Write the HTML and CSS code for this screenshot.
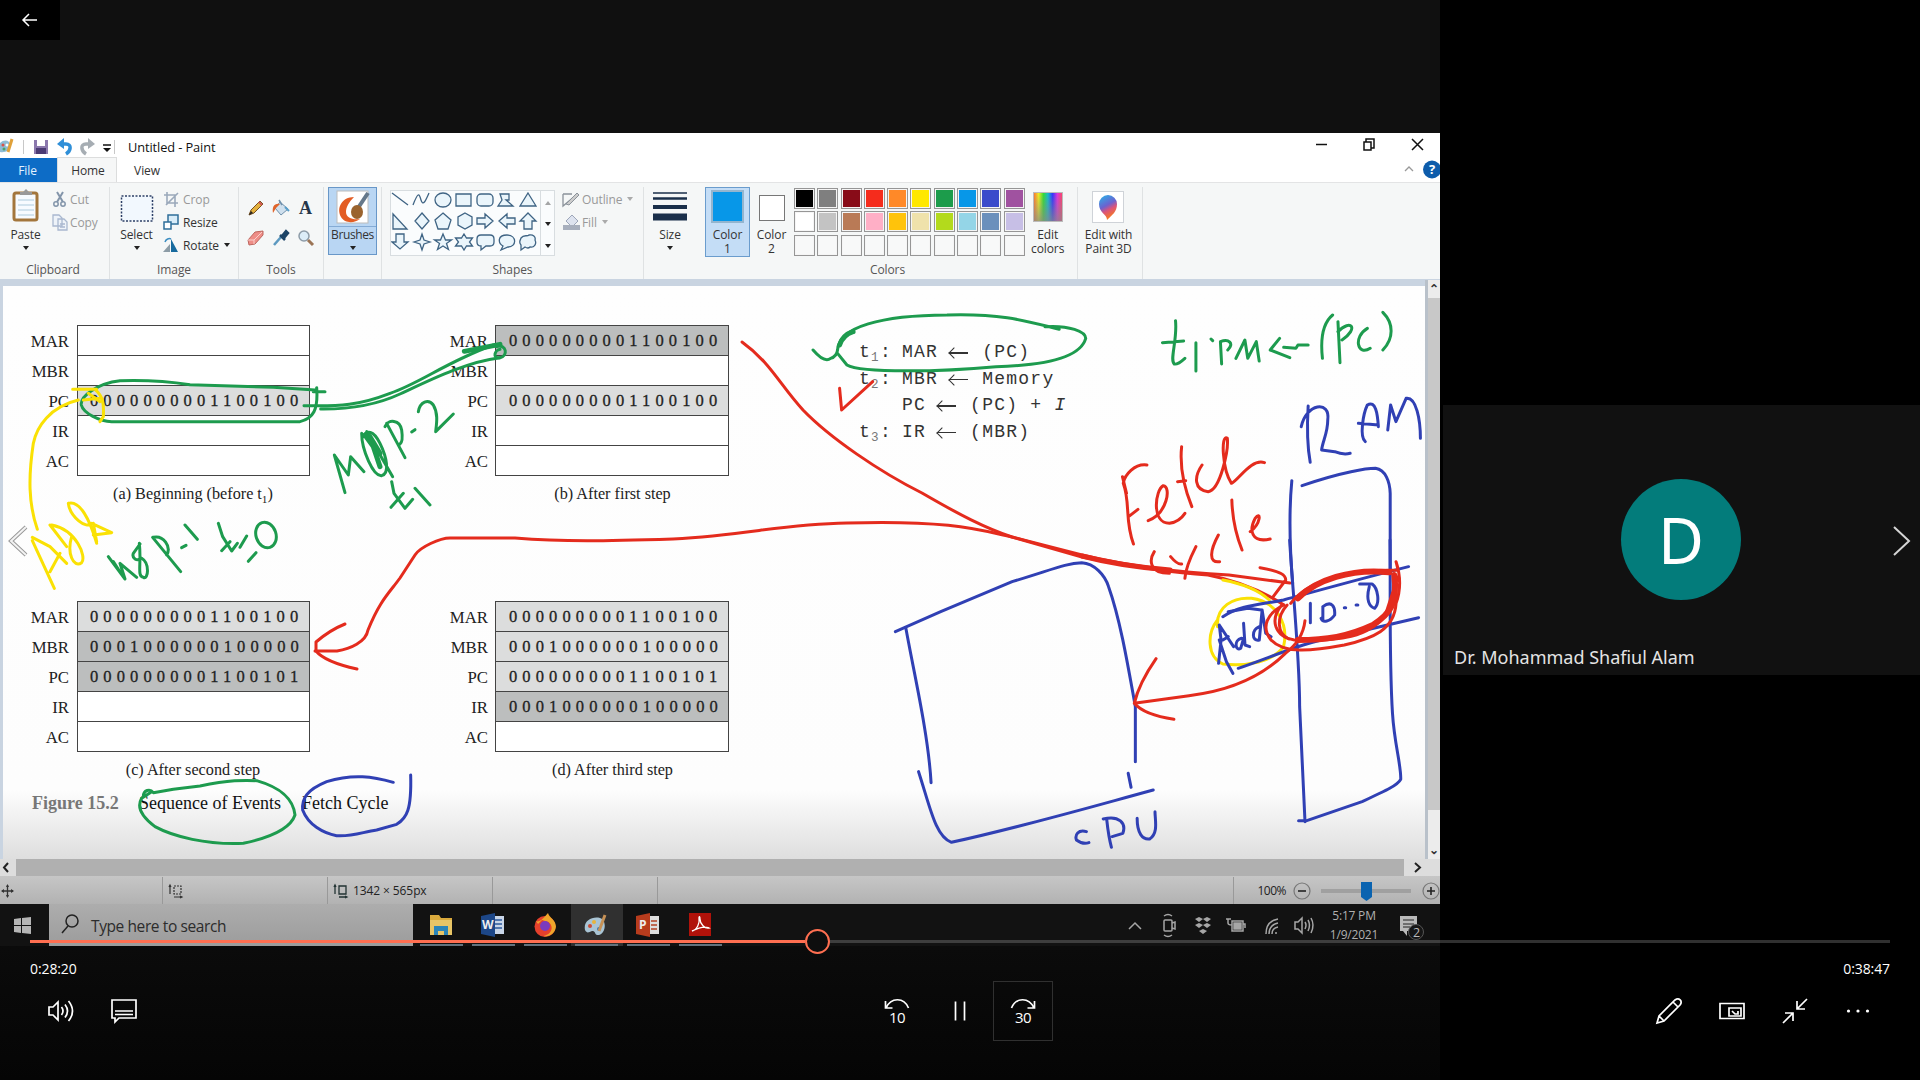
FILE: index.html
```html
<!DOCTYPE html>
<html lang="en">
<head>
<meta charset="utf-8">
<title>Lecture recording</title>
<link rel="stylesheet" href="styles.css">
</head>
<body>
<main class="player">
  <section class="screen">
    <div class="letterbox"></div>
    <div class="paint">
      <header class="titlebar">
        <div class="quick">
          <svg width="23" height="22"><path d="M0 7c4-4 10-3 10 2s-4 8-10 7z" fill="#8fbcd6"/><circle cx="3" cy="9" r="1.500" fill="#d9534a"/><circle cx="7" cy="9" r="1.500" fill="#fff"/><circle cx="4" cy="13" r="1.500" fill="#4da36b"/><path d="M8 16l4-13" stroke="#e0a13a" stroke-width="3"/></svg>
          <i class="bar"></i>
          <svg width="90" height="22">
            <path d="M10 4h14v14H10z" fill="#8b78ad"/><path d="M13 4h8v6h-8z" fill="#fff"/><path d="M12 12h10v6H12z" fill="#4b3b74"/>
            <path d="M37 8h5c6 0 5 7 0 10" fill="none" stroke="#2f8fd8" stroke-width="3.5"/><path d="M33 8l7-6v11z" fill="#2f8fd8"/>
            <path d="M67 8h-5c-6 0-5 7 0 10" fill="none" stroke="#a6adb3" stroke-width="3.5"/><path d="M71 8l-7-6v11z" fill="#a6adb3"/>
            <path d="M79 9h8" stroke="#111" stroke-width="1.5"/><path d="M79 12h8l-4 4z" fill="#111"/>
          </svg>
          <i class="bar"></i>
          <span class="doc-title">Untitled - Paint</span>
        </div>
        <svg class="win-buttons" width="130" height="26" fill="none" stroke="#111" stroke-width="1.5">
          <path d="M6 11.5h11"/><path d="M54 9h7v8h-7zM56 9V6h8v9h-3"/><path d="M102 6l11 11M113 6l-11 11"/>
        </svg>
      </header>
      <nav class="tabs">
        <span class="tab file">File</span><span class="tab home">Home</span><span class="tab view">View</span>
        <svg class="help" width="40" height="24"><path d="M5 13l4-4 4 4" fill="none" stroke="#999" stroke-width="1.3"/><circle cx="32" cy="11.500" r="9" fill="#0d5cab"/><text x="29" y="16" fill="#fff" font-size="13" font-weight="700">?</text></svg>
      </nav>
      <div class="ribbon">
        <section class="group clipboard">
          <div class="body">
            <div class="big paste">
              <svg width="28" height="35"><rect x="2" y="5" width="23" height="27" rx="2" fill="#f7fbff" stroke="#a3763c" stroke-width="3"/><path d="M8 7V4h3l3-3 3 3h3v3z" fill="#999"/><path d="M6 12h16M6 17h16M6 22h16M6 27h16" stroke="#c6dbe9" stroke-width="1.500"/></svg>
              <span>Paste</span><b class="caret"></b>
            </div>
            <div class="list dim">
              <span><svg width="19" height="18"><path d="M6 2l6 10M12 2L6 12" stroke="#8395aa" stroke-width="2"/><circle cx="5" cy="14" r="2.200" fill="none" stroke="#8395aa" stroke-width="1.500"/><circle cx="12" cy="14" r="2.200" fill="none" stroke="#8395aa" stroke-width="1.500"/></svg>Cut</span>
              <span><svg width="19" height="18" fill="#eef3f9" stroke="#a9b8cf" stroke-width="1.300"><path d="M2 2h6l3 3v8H2zM7 6h6l3 3v8H7z"/><path d="M9 11h5M9 14h5"/></svg>Copy</span>
            </div>
          </div>
          <h2>Clipboard</h2>
        </section>
        <section class="group image">
          <div class="body">
            <div class="big">
              <svg width="34" height="35"><rect x="1.500" y="8" width="31" height="25" fill="#f2f8fe" stroke="#2c3f66" stroke-width="1.500" stroke-dasharray="2 1.500"/></svg>
              <span>Select</span><b class="caret"></b>
            </div>
            <div class="list">
              <span class="dim"><svg width="20" height="18" fill="none" stroke="#9ba9bb" stroke-width="1.600"><path d="M4 2v11h11M1 5h11v12M3 15L15 3"/></svg>Crop</span>
              <span><svg width="20" height="18"><path d="M5 2h10v9H5z" fill="#d8ecf8" stroke="#2f6f99" stroke-width="1.500"/><path d="M1 9h7v7H1z" fill="#fff" stroke="#2f6f99" stroke-width="1.500"/></svg>Resize</span>
              <span><svg width="20" height="18"><path d="M0 16h7V8z" fill="#8c9ca6"/><path d="M8 16V3l7 13z" fill="#176a9e"/><path d="M2 6c1-3 4-4 6-3" fill="none" stroke="#3c8ec2" stroke-width="1.500"/></svg>Rotate <b class="caret"></b></span>
            </div>
          </div>
          <h2>Image</h2>
        </section>
        <section class="group tools">
          <div class="body toolgrid">
            <svg viewBox="0 0 18 18"><path d="M2 16l2-5 9-9 3 3-9 9z" fill="#e3b13e" stroke="#775020"/><path d="M2 16l2-4 2 2z" fill="#222"/><path d="M12 3l3 3" stroke="#c55" stroke-width="2"/></svg>
            <svg viewBox="0 0 18 18"><path d="M8 3l8 7-7 6-6-7z" fill="#cfe0ee" stroke="#6f90ab"/><path d="M1 14c-1-6 1-10 7-9l-4 4z" fill="#e0642b"/><path d="M7 1l3 5" stroke="#6f90ab" stroke-width="1.500"/><path d="M13 8l4 4" stroke="#5a9fca" stroke-width="2"/></svg>
            <svg viewBox="0 0 18 18"><text x="2" y="15" class="letter-icon">A</text></svg>
            <svg viewBox="0 0 18 18"><path d="M1 11l7-8 8-1v4l-8 9-6 1z" fill="#ee8d87" stroke="#bd665e"/><path d="M1 11l6 0 8-8M7 11v4" fill="none" stroke="#f9d0cb"/></svg>
            <svg viewBox="0 0 18 18"><path d="M2 16l7-8" stroke="#5c99c0" stroke-width="2.500"/><path d="M8 6l5 5M10 7l4-5 2 2-4 5z" stroke="#1c4467" stroke-width="2.500" fill="#1c4467"/></svg>
            <svg viewBox="0 0 18 18"><circle cx="7" cy="7" r="5" fill="#dcedf8" stroke="#8d9ca8" stroke-width="1.500"/><path d="M11 11l5 5" stroke="#9b7455" stroke-width="3"/></svg>
          </div>
          <h2>Tools</h2>
        </section>
        <section class="group brush-group">
          <div class="brushes">
            <svg width="34" height="35"><rect x="1" y="1" width="31" height="32" fill="#fff" stroke="#bbb"/><path d="M18 7C6 7 0 18 5 27c4 7 14 6 19 2-7 1-14-1-14-7 0-5 3-10 8-15z" fill="#e35d24"/><path d="M32 3L22 18" stroke="#65788a" stroke-width="4"/><ellipse cx="21" cy="22" rx="6" ry="7" fill="#9a632e"/></svg>
            <span>Brushes</span><b class="caret"></b>
          </div>
        </section>
        <section class="group shapes">
          <div class="body">
            <div class="shape-box">
              <svg width="149" height="64" viewBox="1 2 149 64" fill="#eaf5fb" stroke="#3f6484" stroke-width="1.300">
                <path d="M2 4l16 12M23 16c5-13 6-12 8-5s5 0 8-7" fill="none"/><ellipse cx="53" cy="11" rx="8" ry="7"/><path d="M66 5h15v12H66z"/><rect x="87" y="5" width="16" height="12" rx="4"/><path d="M108 17l4-6-2-6h9v6h-3l7 6zM138 4l8 13h-16z"/>
                <path d="M3 25v15h14zM32 24l7 8-7 8-7-8zM53 24l8 7-3 9H48l-3-9zM75 24l7 4v8l-7 4-7-4v-8zM87 29h8v-4l8 7-8 7v-4h-8zM125 29h-8v-4l-8 7 8 7v-4h8zM138 24l8 8h-4v8h-8v-8h-4z"/>
                <path d="M6 45h8v8h4l-8 7-8-7h4zM32 45l2 6 6 2-6 2-2 6-2-6-6-2 6-2zM53 45l2.500 6h6l-5 3.500 2 6-5.500-3.500-5.500 3.500 2-6-5-3.500h6zM74 45l2.500 4h6l-3 4 3 4h-6l-2.500 4-2.500-4h-6l3-4-3-4h6z"/>
                <path d="M91 46h9q4 0 4 4v3q0 4-4 4h-4l-5 4v-4q-4 0-4-4v-3q0-4 4-4z"/><path d="M113 57l-2 4 7-3c9 0 9-12-1-12s-9 8-4 11zM131 56c-3-3 0-6 0-7 3-4 6-1 8-3 4-1 7 2 6 5 2 4-1 8-5 7-2 2-5 0-5 0l-4 3z"/>
              </svg>
              <div class="shape-scroll"><b class="caret up"></b><b class="caret"></b><b class="caret lined"></b></div>
            </div>
            <div class="list dim">
              <span><svg width="21" height="18"><path d="M2 4h9M2 4v12l12-10" fill="none" stroke="#8b939b" stroke-width="1.300"/><path d="M5 14L16 3l2 2L8 15z" fill="#ccc" stroke="#8b939b"/></svg>Outline <b class="caret"></b></span>
              <span><svg width="21" height="18"><path d="M5 8l6-6 6 6-6 6z" fill="#dde3ef" stroke="#9da6b9"/><path d="M2 12h17v5H2z" fill="#a7afbd"/></svg>Fill <b class="caret"></b></span>
            </div>
          </div>
          <h2>Shapes</h2>
        </section>
        <section class="group size">
          <div class="big">
            <svg width="34" height="35"><path d="M0 5h34" stroke="#1a2f4a" stroke-width="1.500"/><path d="M0 10.500h34" stroke="#1a2f4a" stroke-width="2.500"/><path d="M0 19h34" stroke="#1a2f4a" stroke-width="4"/><path d="M0 29h34" stroke="#1a2f4a" stroke-width="7"/></svg>
            <span>Size</span><b class="caret"></b>
          </div>
        </section>
        <section class="group colors">
          <div class="body">
            <div class="color one"><i></i><span>Color<br>1</span></div>
            <div class="color two"><i></i><span>Color<br>2</span></div>
            <div class="palette">
              <i style="--c:#000"></i><i style="--c:#7f7f7f"></i><i style="--c:#880c18"></i><i style="--c:#f52c1c"></i><i style="--c:#ff8928"></i><i style="--c:#ffe800"></i><i style="--c:#1c9c4b"></i><i style="--c:#0797e8"></i><i style="--c:#3a4bcb"></i><i style="--c:#a052a0"></i>
              <i style="--c:#fff"></i><i style="--c:#c3c3c3"></i><i style="--c:#b97a56"></i><i style="--c:#ffafc6"></i><i style="--c:#ffc30b"></i><i style="--c:#efe2ab"></i><i style="--c:#b3da1c"></i><i style="--c:#94d5e7"></i><i style="--c:#6b90bc"></i><i style="--c:#c7bfe6"></i>
              <i></i><i></i><i></i><i></i><i></i><i></i><i></i><i></i><i></i><i></i>
            </div>
            <div class="edit"><i class="spectrum"></i><span>Edit<br>colors</span></div>
          </div>
          <h2>Colors</h2>
        </section>
        <section class="group three-d">
          <div class="edit">
            <svg width="33" height="33"><defs><linearGradient id="pin" x1="0" x2=".4" y1="0" y2="1"><stop offset="0" stop-color="#25b8ea"/><stop offset=".5" stop-color="#6b62d0"/><stop offset=".7" stop-color="#dc5379"/><stop offset="1" stop-color="#f57a21"/></linearGradient></defs><rect x=".5" y=".5" width="31" height="31" fill="#fff" stroke="#cfd3d8"/><path d="M15 29c0-6-8-7-8-16a9 9 0 0118 0c0 8-5 11-10 16z" fill="url(#pin)"/></svg>
            <span>Edit with<br>Paint 3D</span>
          </div>
        </section>
      </div>
      <div class="workspace">
        <div class="sheet">
          <div class="figures">
            <figure class="reg">
              <div class="row"><label>MAR</label><p></p></div><div class="row"><label>MBR</label><p></p></div><div class="row light"><label>PC</label><p>0000000001100100</p></div><div class="row"><label>IR</label><p></p></div><div class="row"><label>AC</label><p></p></div>
              <figcaption>(a) Beginning (before t<sub>1</sub>)</figcaption>
            </figure>
            <figure class="reg">
              <div class="row dark"><label>MAR</label><p>0000000001100100</p></div><div class="row"><label>MBR</label><p></p></div><div class="row light"><label>PC</label><p>0000000001100100</p></div><div class="row"><label>IR</label><p></p></div><div class="row"><label>AC</label><p></p></div>
              <figcaption>(b) After first step</figcaption>
            </figure>
            <figure class="reg">
              <div class="row light"><label>MAR</label><p>0000000001100100</p></div><div class="row dark"><label>MBR</label><p>0001000000100000</p></div><div class="row dark"><label>PC</label><p>0000000001100101</p></div><div class="row"><label>IR</label><p></p></div><div class="row"><label>AC</label><p></p></div>
              <figcaption>(c) After second step</figcaption>
            </figure>
            <figure class="reg">
              <div class="row light"><label>MAR</label><p>0000000001100100</p></div><div class="row light"><label>MBR</label><p>0001000000100000</p></div><div class="row light"><label>PC</label><p>0000000001100101</p></div><div class="row dark"><label>IR</label><p>0001000000100000</p></div><div class="row"><label>AC</label><p></p></div>
              <figcaption>(d) After third step</figcaption>
            </figure>
            <p class="figure-title"><b>Figure 15.2</b><span>Sequence of Events</span><span>Fetch Cycle</span></p>
          </div>
          <div class="micro">
            <div><span>t<sub>1</sub>:</span><span>MAR</span><span class="arr"></span><span>(PC)</span></div>
            <div><span>t<sub>2</sub>:</span><span>MBR</span><span class="arr"></span><span>Memory</span></div>
            <div><span></span><span>PC</span><span class="arr"></span><span>(PC) + <em>I</em></span></div>
            <div><span>t<sub>3</sub>:</span><span>IR</span><span class="arr"></span><span>(MBR)</span></div>
          </div>
          <svg class="ink" viewBox="3 286 1422 573">
            <g transform="translate(0 290) scale(.33333)">
              <g class="green">
                <path d="M945 300L820 292 570 284C480 270 420 270 360 272 290 280 240 320 244 345 250 370 300 394 335 395H900C940 385 955 360 950 293M940 305H975"/>
                <path d="M912 347C1020 350 1080 345 1170 310 1260 280 1340 215 1480 165M962 357C1060 358 1140 340 1200 312 1290 270 1400 215 1500 203"/>
                <path class="fat" d="M1393 184L1500 163"/><path d="M1490 170C1520 160 1525 200 1500 203S1485 180 1500 178"/>
                <path d="M1035 608L1003 495 1045 555 1052 500 1092 545M1085 430C1085 480 1120 560 1145 557 1170 550 1160 500 1140 460 1120 420 1100 420 1090 440M1100 425L1178 560M1160 400L1215 503M1155 410C1165 385 1200 390 1205 420Q1210 455 1200 462M1235 426L1245 419M1255 365C1260 335 1285 325 1300 345 1315 370 1310 400 1307 425L1360 372"/>
                <path class="fat" d="M1095 435L1120 470 1140 530M1110 440L1140 490"/>
                <path d="M1175 575L1182 610 1215 655 1238 628M1173 652L1210 610M1245 595L1290 645"/>
                <path d="M325 800L375 867 360 820 410 862M340 815L368 858M420 762L400 790C395 805 410 815 425 805 450 820 445 870 430 862 410 860 425 820 418 760M458 742L542 845M460 742C490 735 515 770 500 795M545 773L558 766M555 705L592 748M655 700L668 740 695 783 712 760M665 782L690 755M720 772L740 738M745 814L768 788"/><ellipse cx="798" cy="735" rx="30" ry="39" transform="rotate(-18 798 735)"/>
              </g>
              <g class="yellow"><path d="M235 330C150 350 110 410 100 460 85 560 85 640 112 718M218 298H290M250 330L300 325M265 310L300 335M285 298C310 320 312 340 310 380L300 395M97 752L163 895M97 742L150 770 200 820M150 845L180 790M150 705L200 770M155 705C230 720 260 800 245 818 220 835 200 790 215 740M205 640C240 630 270 690 290 760M205 640C210 680 260 720 275 700L335 728 280 735M280 700L290 755"/></g>
            </g>
            <g transform="translate(0 580) scale(.33333)">
              <path class="green" d="M430 650C430 630 450 625 460 638L520 628 600 618C690 600 730 600 770 602 850 625 880 660 885 705 870 750 800 775 730 790 620 795 520 770 465 740 425 710 410 680 425 655L455 635"/>
              <path class="blue" d="M1180 607C1120 590 1060 580 980 605 920 630 905 655 908 690 925 735 970 760 1010 767 1060 770 1090 755 1130 750L1190 733C1220 715 1235 690 1232 585"/>
            </g>
            <g class="red"><path d="M742 342C770 362 780 385 803 410 830 438 880 472 922 493 960 515 985 528 1012 537L1082 555Q1150 571 1229 575L1290 583"/>
              <path d="M315 651H337C350 649 366 642 368 630 380 600 390 592 400 578L415 555C420 547 440 538 450 538H515C563 542 607 541 673 539 750 535 780 524 847 523 950 520 980 530 1012 537L1082 557Q1160 572 1208 575 1250 583 1284 605"/>
              <path d="M345 624Q330 630 316 642V651Q325 662 357 669"/><path class="fat" d="M1082 556Q1120 566 1170 570"/></g>
            <g transform="translate(800 290) scale(.40816 .33333)">
              <g class="green"><path d="M32 180Q60 220 75 205 90 200 92 180C95 110 200 76 360 75 500 70 560 95 635 118M600 110C660 105 700 125 700 145 690 190 630 225 480 230 350 245 150 250 115 225L92 190"/><path class="fat" d="M97 165Q105 135 130 125"/>
                <path d="M920 92C925 150 905 210 917 222Q925 225 943 205M888 158L940 153M970 158V243M1007 147L1011 152M1033 222L1030 155C1050 145 1065 160 1048 180M1068 205L1090 150 1097 205 1118 155 1125 213M1200 203L1152 180 1175 145M1185 172L1215 175 1220 165 1245 165M1305 75C1280 100 1275 150 1280 205M1318 95L1323 218M1318 125C1350 85 1370 115 1328 150M1390 115C1355 140 1365 200 1397 175M1428 67C1455 100 1455 145 1428 180"/></g>
              <path class="red" d="M97 295L102 360 178 275M850 525C820 520 795 555 792 580 810 640 795 690 817 762M805 680L828 658M790 560L800 610M853 692C900 670 910 590 890 587 870 600 860 700 905 700Q930 695 943 670M935 470C930 530 940 590 960 650M925 575L945 572M985 525C965 560 965 600 1000 605 1030 600 1050 480 1047 445 1030 430 1035 540 1057 580 1075 570 1105 505 1138 518M868 785C855 810 855 850 905 850M908 800Q925 825 935 822M970 770Q945 830 943 865M1025 735C1005 780 1000 820 1028 815M1058 630Q1060 710 1083 780M1103 725C1130 700 1130 660 1115 685 1100 720 1105 760 1152 747M1127 833C1180 845 1190 855 1190 870L1158 922"/>
              <path class="blue" d="M1245 348Q1240 450 1250 517M1228 410C1240 340 1300 330 1293 390 1293 430 1280 455 1278 480L1310 485Q1330 495 1348 490M1385 455C1370 440 1380 370 1390 345 1410 330 1415 370 1417 410M1368 400L1417 405M1440 420L1447 345 1460 395 1485 325C1510 320 1520 390 1520 445"/>
              <path class="blue" d="M1205 572Q1195 700 1207 880M1230 587C1330 545 1390 535 1410 535 1435 540 1445 575 1446 610V850"/>
            </g>
            <g transform="translate(880 540) scale(.35714 .33333)">
              <path class="yellow" d="M960 120C1010 130 1060 150 1090 180M945 260C940 200 990 170 1040 175 1110 185 1145 250 1130 320 1100 365 1030 380 960 372 915 350 915 280 945 240"/>
              <g class="blue"><path d="M43 275L170 215 370 125C480 90 520 70 565 68 600 70 630 105 640 140 670 230 690 350 715 500V665M72 262C95 400 135 580 143 728M108 695C140 800 155 890 200 907 400 860 560 810 765 750M695 700L703 742M578 875C555 868 545 885 550 900 565 912 575 912 585 908M635 840Q640 890 648 922M625 837C670 825 690 850 680 880L650 890M720 835C720 880 735 900 755 897 780 880 770 840 770 815"/>
                <path d="M1147 0C1155 150 1175 350 1175 500L1190 845M1172 842H1195L1350 785C1420 750 1450 735 1458 718 1460 680 1440 610 1435 520 1425 350 1430 150 1428 0M960 230C1010 195 1060 195 1130 180 1250 145 1350 115 1480 80M1003 385C1100 350 1190 305 1280 290L1508 233M1205 190V248M1240 200V240M1240 200C1265 180 1275 200 1273 225 1260 245 1240 250 1235 235M1300 203H1304M1333 195H1338M1343 132H1378M1370 140C1360 180 1370 200 1385 205 1400 190 1395 145 1378 132"/>
                <path d="M950 255L955 300 948 370M950 255L990 320M950 300L970 365 988 400M960 300L975 290M975 215L1030 205 1068 210M1012 295C990 300 995 335 1010 325L1018 295M1018 250L1022 315 1035 320M1062 260C1040 270 1040 305 1062 300L1070 210 1080 280 1095 290"/></g>
              <g class="red"><path d="M1190 242C1185 290 1160 320 1135 340 1060 420 960 455 865 467L712 490M773 356Q725 430 712 490 740 525 823 538M1150 190C1200 120 1300 90 1450 90M1445 65Q1465 130 1445 190C1440 270 1380 295 1300 315 1200 335 1130 340 1095 300 1065 260 1085 220 1130 195M1125 195C1090 240 1105 290 1160 300 1290 305 1370 290 1415 225L1450 110"/><path class="thick" d="M1170 175C1220 120 1320 85 1425 97M1440 105C1450 190 1430 220 1380 255 1310 290 1250 300 1170 300"/><path d="M1140 195C1110 230 1110 280 1145 297"/></g>
            </g>
          </svg>
        </div>
        <div class="vscroll"><b>⌃</b><i></i><b>⌄</b></div>
      </div>
      <div class="hscroll"><svg width="16" height="17"><path d="M8 4L4 8.500 8 13"/></svg><i></i><svg width="36" height="17"><path d="M11 4l5 4.500-5 4.500"/></svg></div>
      <footer class="status">
        <span class="cell c1"><svg width="16" height="18" stroke="#333" stroke-width="1.300" fill="none"><path d="M2 9h11M7.500 3v12"/><path d="M1 9l3-2v4zM14 9l-3-2v4zM7.500 2L6 5h3zM7.500 16L6 13h3z" fill="#333" stroke="none"/></svg></span>
        <span class="cell c2"><svg width="16" height="18" fill="none" stroke="#333" stroke-width="1.200"><path d="M2 3v9M1 5l1-2 1 2M6 15h8M12 14l2 1-2 1"/><path d="M6 4h7v8H6z" stroke-dasharray="2 1"/></svg></span>
        <span class="cell c3"><svg width="16" height="18" fill="none" stroke="#233" stroke-width="1.300"><path d="M2 3v9M1 5l1-2 1 2M6 15h8M12 14l2 1-2 1M6 4h7v8H6z"/></svg>1342 × 565px</span>
        <span class="cell c4"></span><span class="cell c5"></span>
        <span class="zoom">100%<svg width="149" height="22" fill="none" stroke="#777" stroke-width="1.200"><circle cx="11" cy="11" r="8"/><path d="M7 11h8" stroke="#222" stroke-width="1.600"/><path d="M30 11h90" stroke="#a0a0a0" stroke-width="4"/><path d="M70 2h11v15l-5.500 4-5.500-4z" fill="#0a63b0" stroke="none"/><circle cx="140" cy="11" r="8"/><path d="M136 11h8M140 7v8" stroke="#222" stroke-width="1.600"/></svg></span>
      </footer>
    </div>
    <div class="taskbar">
      <div class="start"><svg width="18" height="18" fill="#b5b5b5"><path d="M0 2l7-1v7H0zM8 1l9-1v8H8zM0 9h7v7l-7-1zM8 9h9v8l-9-1z"/></svg></div>
      <div class="search"><svg width="19" height="20" fill="none" stroke="#222" stroke-width="1.500"><circle cx="11" cy="7" r="6"/><path d="M7 12L1 19"/></svg>Type here to search</div>
      <div class="apps">
        <span><svg viewBox="0 0 24 24"><path d="M1 2h9l2 3h11v17H1z" fill="#d9a93c"/><path d="M1 7h22v15H1z" fill="#e8c566"/><path d="M5 22v-9h14v9h-4v-4H9v4z" fill="#2b85b8"/></svg></span>
        <span><svg viewBox="0 0 24 24"><path d="M12 3h11v18H12z" fill="#c9d6e8"/><path d="M14 7h7M14 11h7M14 15h7" stroke="#2c5a9c" stroke-width="1.500"/><path d="M0 3l14-3v24L0 21z" fill="#1d4788"/><text x="1" y="16" class="app-letter">W</text></svg></span>
        <span><svg viewBox="0 0 24 24"><circle cx="12" cy="13.500" r="10.500" fill="#e5402c"/><path d="M3 8C6 10 11 5 15 0c1 5 10 8 7.500 16-2 6-8 8-12 7 8-2 11-9 5-14L9 7 5 11z" fill="#efa52b"/><circle cx="12" cy="13" r="5" fill="#7a3bbd"/></svg></span>
        <span class="active"><svg viewBox="0 0 24 24"><path d="M1 17C-1 8 8 3 16 5c7 2 6 15-1 17-5 1-3-5-7-4-3 1-5 3-7-1z" fill="#a9c4d4"/><circle cx="6" cy="13" r="2" fill="#c94b35"/><circle cx="10" cy="9" r="2" fill="#e8b33a"/><circle cx="15" cy="16" r="2" fill="#387ab4"/><path d="M15 18l6-16" stroke="#c69156" stroke-width="3"/></svg></span>
        <span><svg viewBox="0 0 24 24"><path d="M12 3h11v18H12z" fill="#ddd"/><path d="M15 8h6M15 12h6M15 16h6" stroke="#b34225" stroke-width="1.500"/><path d="M0 3l14-3v24L0 21z" fill="#b83c1d"/><text x="3" y="16" class="app-letter">P</text></svg></span>
        <span><svg viewBox="0 0 24 24"><path d="M1 0h22v23H1z" fill="#b0120a"/><path d="M4 18C9 17 12 10 11 5c0-2 1-2 1 1 0 5 5 10 9 9-4-2-11 0-17 3z" fill="none" stroke="#fff" stroke-width="1.300"/></svg></span>
      </div>
      <svg class="tray" width="220" height="42" fill="none" stroke="#a6a6a6" stroke-width="1.500">
        <path d="M28 25l6-6 6 6"/><rect x="63" y="16" width="8" height="11" rx="1"/><path d="M71 19l3-1v7l-3-1M63 12q4-3 8 0M63 31q4 3 8 0"/>
        <path d="M94 15l4-2 4 2-4 3zM102 15l4-2 4 2-4 3zM94 21l4-2 4 2-4 3zM102 21l4-2 4 2-4 3zM98 27l4-2 4 2-4 3z" fill="#a6a6a6" stroke="none"/>
        <path d="M131 17h11v10h-11zM142 20h2v4M127 15v4q0 2 4 2M125 15h5"/><path d="M133 19h7v6h-7z" fill="#a6a6a6"/>
        <path d="M165 30q0-13 12-15M168 30q0-9 9-11M171 30q0-6 6-7M175 30v-2"/><path d="M194 18h3l4-4v15l-4-4h-3zM204 18q2 3 0 7M207 16q3 5 0 11M210 14q4 7 0 15"/>
      </svg>
      <div class="clock"><span>5:17 PM</span><span>1/9/2021</span></div>
      <svg class="notify" width="50" height="42"><path d="M11 12h17v15H18v5l-4-5h-3z" fill="#b9b9b9"/><path d="M14 16h11M14 20h11M14 23h7" stroke="#222"/><circle cx="27" cy="28" r="7.500" fill="#161616" stroke="#555"/><text x="24" y="32.500" fill="#bbb" font-size="12.500">2</text></svg>
    </div>
    <div class="below"></div>
  </section>
  <aside class="attendees">
    <div class="tile"><div class="avatar">D</div><p>Dr. Mohammad Shafiul Alam</p></div>
  </aside>

  <div class="back"><svg width="18" height="14" fill="none" stroke="#fff" stroke-width="1.500"><path d="M16 7H2M8 1L2 7l6 6"/></svg></div>
  <div class="nav"><svg width="30" height="40" fill="none"><path d="M26 6L11 20l15 14" stroke="#999" stroke-width="4"/><path d="M26 6L11 20l15 14" stroke="#f3f3f3" stroke-width="2"/></svg>
    <svg width="30" height="40" fill="none" stroke="#d5d5d5" stroke-width="2"><path d="M4 6l15 14L4 34"/></svg></div>
  <div class="controls">
    <div class="seek"><i class="played"></i><i class="knob"></i><i class="rest"></i></div>
    <div class="times"><span>0:28:20</span><span>0:38:47</span></div>
    <div class="buttons">
      <div class="set left">
        <svg viewBox="0 0 28 28"><path d="M2 10h4l5-5v18l-5-5H2zM14.500 10q3 4 0 8M18 7.500q5 6.500 0 13M21.500 4q8 10 0 20"/></svg>
        <svg viewBox="0 0 28 28"><path d="M2 3h24v18H9l-4 4v-4H2zM5 14h18M5 17.500h18"/></svg>
      </div>
      <div class="set mid">
        <span><svg viewBox="0 0 28 28"><path d="M2.500 4v7h7M3 11C8 0 21 0 25.500 11"/><text x="14" y="26">10</text></svg></span>
        <span><svg viewBox="0 0 28 28"><path d="M9.500 4.500v19M18.500 4.500v19"/></svg></span>
        <span class="hover"><svg viewBox="0 0 28 28"><path d="M25.500 4v7h-7M25 11C20 0 7 0 2.500 11"/><text x="14" y="26">30</text></svg></span>
      </div>
      <div class="set right">
        <svg viewBox="0 0 28 28"><path d="M2 26l2-7L20 3c4-3 8 1 5 5L9 24zM18 5l5 5M4 19l5 5"/></svg>
        <svg viewBox="0 0 28 28"><path d="M2 6.500h24v15H2z"/><path d="M11 11h12v8H11zM14 14l3 3h3v-3"/></svg>
        <svg viewBox="0 0 28 28"><path d="M26 2L16 12M16 4v8h8M2 26l10-10M4 16h8v8"/></svg>
        <svg viewBox="0 0 28 28"><g fill="#fff" stroke="none"><circle cx="4.500" cy="14" r="1.600"/><circle cx="14" cy="14" r="1.600"/><circle cx="23.500" cy="14" r="1.600"/></g></svg>
      </div>
    </div>
  </div>
</main>
</body>
</html>
```
FILE: styles.css
```css
* { box-sizing: border-box; }
body { margin: 0; background: #000; font-family: "Open Sans", "Noto Sans", sans-serif; overflow: hidden; }
p, h2, figure { margin: 0; }
svg { display: block; flex: none; }
.player { position: relative; width: 1920px; height: 1080px; display: flex; background: #000; overflow: hidden; }
.screen { width: 1440px; display: flex; flex-direction: column; overflow: hidden; }
.letterbox { height: 133px; background: #101010; }
.below { flex: 1; background: linear-gradient(#0b0b0b, #050505); }

.paint { height: 771px; display: flex; flex-direction: column; background: #fff; color: #333; font-size: 12px; letter-spacing: -0.1px; }
.titlebar { height: 25px; display: flex; justify-content: space-between; }
.quick { display: flex; align-items: center; padding-top: 2px; }
.bar { width: 1px; height: 14px; background: #c8c8c8; }
.doc-title { font-size: 12.800px; color: #111; margin-left: 13px; }
.tabs { height: 24px; display: flex; }
.tab { display: flex; align-items: center; justify-content: center; height: 25px; }
.file { width: 57px; padding-right: 2px; background: #0d6cc6; color: #e5f2ff; }
.home { width: 60px; padding-left: 2px; background: #f6f7f7; border: 1px solid #dcdddd; border-bottom: 0; margin-top: -1px; height: 26px; }
.view { width: 60px; }
.help { margin-left: auto; }

.ribbon { height: 97px; display: flex; background: #f5f7f7; border-top: 1px solid #e3e4e5; padding-top: 4px; }
.group { height: 92px; border-right: 1px solid #dfe2e3; position: relative; display: flex; flex-direction: column; flex: none; }
.group .body { display: flex; height: 72px; }
.group h2 { margin-top: auto; font-size: 12px; font-weight: 400; line-height: 13px; text-align: center; height: 16px; color: #555; }
.big { display: flex; flex-direction: column; align-items: center; line-height: 16px; padding-top: 1px; }
.big span { margin-top: 4px; }
.caret { width: 0; height: 0; border: 3.500px solid transparent; border-top: 4px solid #222; border-bottom: 0; margin-top: 3px; display: inline-block; }
.list { display: flex; flex-direction: column; gap: 5px; padding-top: 3px; }
.list > span { height: 18px; display: flex; align-items: center; white-space: nowrap; }
.list .caret { margin: 0 0 0 5px; }
.dim { color: #999; }
.dim .caret { border-top-color: #aaa; }
.clipboard { width: 110px; }
.clipboard .big { width: 51px; }
.clipboard h2 { padding-right: 3px; }
.image { width: 129px; }
.image .big { width: 53px; }
.tools { width: 85px; }
.group .toolgrid { display: grid; grid-template-columns: repeat(3, 18px); grid-template-rows: 18px 18px; gap: 12px 7px; padding: 12px 0 0 8px; }
.letter-icon { font: bold 18px "Liberation Serif", serif; fill: #25364a; }
.brush-group { width: 58px; }
.brushes { width: 49px; height: 68px; margin-left: 4px; background: #b9d6f3; border: 1px solid #6897c8; display: flex; flex-direction: column; align-items: center; padding-top: 2px; line-height: 16px; }
.brushes span { border-top: 1px solid #84abd5; width: 100%; text-align: center; margin-top: 1px; letter-spacing: -0.4px; }
.shapes { width: 262px; }
.shape-box { margin: 3px 6px 0 8px; width: 165px; height: 66px; display: flex; border: 1px solid #d8dde0; background: #fafcfd; }
.shape-scroll { width: 14px; border-left: 1px solid #d8dde0; display: flex; flex-direction: column; justify-content: space-around; align-items: center; }
.shape-scroll .caret { border-width: 3px; border-top-width: 4px; border-bottom: 0; }
.shape-scroll .up { transform: rotate(180deg); opacity: .4; }
.shape-scroll .lined { box-shadow: 0 -6px 0 -5px #333; }
.size { width: 56px; border: 0; }
.size .big { padding-right: 4px; }
.colors { width: 378px; }
.colors h2 { padding-right: 2px; }
.color { text-align: center; line-height: 14px; display: flex; flex-direction: column; align-items: center; }
.color.one { width: 45px; height: 70px; margin-left: 5px; background: #c4ddf6; border: 1px solid #6a9ccd; padding-top: 2px; }
.one i { width: 33px; height: 34px; background: #0797e8; border: 2px solid #93b5cf; margin-bottom: 5px; }
.color.two { width: 43px; padding-top: 8px; }
.two i { width: 26px; height: 26px; background: #fff; border: 1px solid #777; margin-bottom: 7px; }
.palette { display: grid; grid-template-columns: repeat(10, 21px); grid-auto-rows: 21px; gap: 2.300px; margin-left: 1px; padding-top: 1px; align-content: start; }
.palette i { border: 1px solid #969696; background: var(--c, #f8f9f9); box-shadow: inset 0 0 0 1px #f5f5f5; }
.edit { display: flex; flex-direction: column; align-items: center; text-align: center; line-height: 14px; padding-top: 4px; white-space: nowrap; }
.edit span { margin-top: 4px; }
.colors .edit { width: 46px; padding-top: 5px; }
.spectrum { width: 30px; height: 30px; border: 1px solid #bbb; background: linear-gradient(transparent, #888b), linear-gradient(90deg, #f73, #ee2, #3d3, #1bc, #33f, #d3d, #f46); margin-bottom: 2px; }
.three-d { width: 65px; }
.three-d .edit { padding-right: 3px; }

.workspace { height: 580px; display: flex; background: #c9d4e1; padding: 7px 0 0 3px; }
.sheet { position: relative; width: 1422px; display: flex; background: linear-gradient(#fefefe 0, #fdfdfd 88%, #dedede 100%); color: #222; font-family: "Liberation Serif", serif; letter-spacing: 0; }
.figures { width: 836px; display: grid; grid-template-columns: 418px 418px; grid-template-rows: 276px 187px auto; padding-top: 39px; }
.reg { width: 308px; }
.row { display: grid; grid-template-columns: 66px 233px; column-gap: 8px; height: 30px; align-items: stretch; }
.row label { text-align: right; font-size: 16.800px; line-height: 33px; }
.row p { border: solid #444; border-width: 1.500px 1.500px 0; padding-left: 12px; font-size: 16.500px; line-height: 30px; letter-spacing: 5.120px; -webkit-text-stroke: .3px #222; white-space: nowrap; background: #fff; }
.reg:nth-child(even) .row { grid-template-columns: 67px 234px; column-gap: 7px; }
.reg:nth-child(even) .row p { padding-left: 13px; }
.row:nth-child(5) p { height: 31px; border-bottom-width: 1.500px; }
.row.light p { background: #dcdddd; }
.row.dark p { background: #bcbebe; }
.reg figcaption { padding-left: 72px; text-align: center; font-size: 16.200px; line-height: 38px; white-space: nowrap; }
.reg:nth-child(even) figcaption { padding-left: 75px; }
sub { font-size: .7em; line-height: 0; vertical-align: -4px; }
.figure-title { grid-column: span 2; padding-left: 29px; display: flex; font-size: 18px; line-height: 31px; color: #111; white-space: nowrap; }
.figure-title b { color: #777; width: 107px; }
.figure-title span { width: 163px; }
.micro { padding: 53px 0 0 20px; font: 18px/26.600px "Liberation Mono", monospace; letter-spacing: 1.250px; color: #333; }
.micro div { display: flex; height: 26.600px; }
.micro span:first-child { width: 43px; }
.micro sub { color: #777; }
.arr { width: 19px; margin: 13px 14px 0 11px; height: 1.500px; background: #333; position: relative; }
.arr::before { content: ""; position: absolute; left: 1px; top: -3px; width: 7px; height: 7px; border: solid #333; border-width: 0 0 1.500px 1.500px; transform: rotate(45deg); }
.ink { position: absolute; inset: 0; width: 1422px; height: 573px; overflow: visible; fill: none; stroke-width: 3; stroke-linecap: round; stroke-linejoin: round; }
.ink * { vector-effect: non-scaling-stroke; }
.green { stroke: #1d9b4e; }
.red { stroke: #e42b1d; }
.yellow { stroke: #fae104; }
.blue { stroke: #3040b4; }
.ink .fat { stroke-width: 5; }
.ink .thick { stroke-width: 6; }
.vscroll { width: 15px; display: flex; flex-direction: column; align-items: center; background: #ececec; border-left: 3px solid #b9c1ca; margin-top: -6px; font-size: 12px; line-height: 18px; }
.vscroll i { width: 12px; height: 512px; background: #c8c8c8; }
.vscroll b:last-child { margin-top: auto; }
.hscroll { height: 17px; display: flex; background: #ddd; fill: none; stroke: #222; stroke-width: 2; }
.hscroll i { flex: 1; background: #b0b0b0; }
.status { height: 28px; display: flex; background: linear-gradient(#c6c6c6, #b2b2b2); color: #222; line-height: 28px; padding-top: 1px; }
.cell { display: flex; align-items: center; border-right: 1px solid #999; padding-left: 5px; }
.c1 { width: 163px; padding-left: 0; }
.c2, .c3 { width: 165px; }
.c3 svg { margin-right: 4px; }
.c4 { width: 165px; }
.c5 { width: 576px; }
.zoom { margin-left: auto; display: flex; align-items: center; letter-spacing: -0.5px; gap: 5px; }

.taskbar { height: 42px; display: flex; background: #121212; }
.start { width: 49px; padding: 13px 0 0 14px; }
.search { width: 364px; display: flex; align-items: center; gap: 11px; padding: 2px 0 0 12px; background: linear-gradient(#adadad, #9c9c9c); font-size: 15.500px; letter-spacing: -0.4px; color: #2c2c2c; }
.search svg { margin-top: -4px; }
.apps { display: flex; padding-left: 3px; }
.apps span { width: 51.800px; padding: 9px 0 0 13px; background: linear-gradient(#64727d, #64727d) 4px 40px / 43px 2px no-repeat; }
.apps svg { width: 24px; height: 24px; }
.apps .active { background-color: #303030; }
.app-letter { font-size: 12px; font-weight: 700; fill: #eee; }
.tray { margin-left: auto; }
.clock { width: 66px; display: flex; flex-direction: column; align-items: center; color: #b0b0b0; font-size: 12px; line-height: 19px; padding-top: 2px; letter-spacing: -0.2px; }
.notify { margin-right: 1px; margin-left: 2px; }

.attendees { flex: 1; padding: 405px 0 0 3px; }
.tile { height: 270px; background: #111; padding: 74px 0 0 178px; }
.avatar { width: 120px; height: 121px; border-radius: 50%; background: #037c7b; color: #fff; font: 63px/121px "Noto Sans", sans-serif; text-align: center; }
.tile p { margin: 42px 0 0 -167px; color: #e4e4e4; font: 18px/30px "Noto Sans", sans-serif; white-space: nowrap; letter-spacing: 0; }

.back { position: absolute; left: 0; top: 0; width: 60px; height: 40px; background: #000; display: grid; place-items: center; }
.nav { position: absolute; left: 0; right: 0; top: 521px; display: flex; justify-content: space-between; }
.controls { position: absolute; left: 0; right: 0; top: 927px; }
.seek { height: 29px; display: flex; align-items: center; padding: 0 30px; }
.played { width: 775px; height: 3px; background: #ff6f51; }
.knob { width: 25px; height: 25px; border: 2px solid #ff6f51; border-radius: 50%; background: #0e0e0e; }
.rest { flex: 1; height: 3px; background: rgba(255, 255, 255, .19); }
.times { display: flex; justify-content: space-between; padding: 3px 30px; color: #fff; font-size: 14px; line-height: 20px; letter-spacing: -0.1px; }
.buttons { display: grid; grid-template-columns: 1fr 186px 1fr; height: 60px; margin-top: -1px; }
.set { display: flex; align-items: center; }
.set svg { width: 28px; height: 28px; fill: none; stroke: #fff; stroke-width: 1.700; }
.set text { font-size: 15px; fill: #fff; stroke: none; text-anchor: middle; letter-spacing: -.6px; }
.left { padding-left: 47px; gap: 35px; }
.mid { justify-content: space-between; }
.mid span { width: 60px; height: 60px; display: grid; place-items: center; }
.mid .hover { border: 1px solid #303030; }
.right { justify-content: flex-end; gap: 35px; padding-right: 48px; }
```
